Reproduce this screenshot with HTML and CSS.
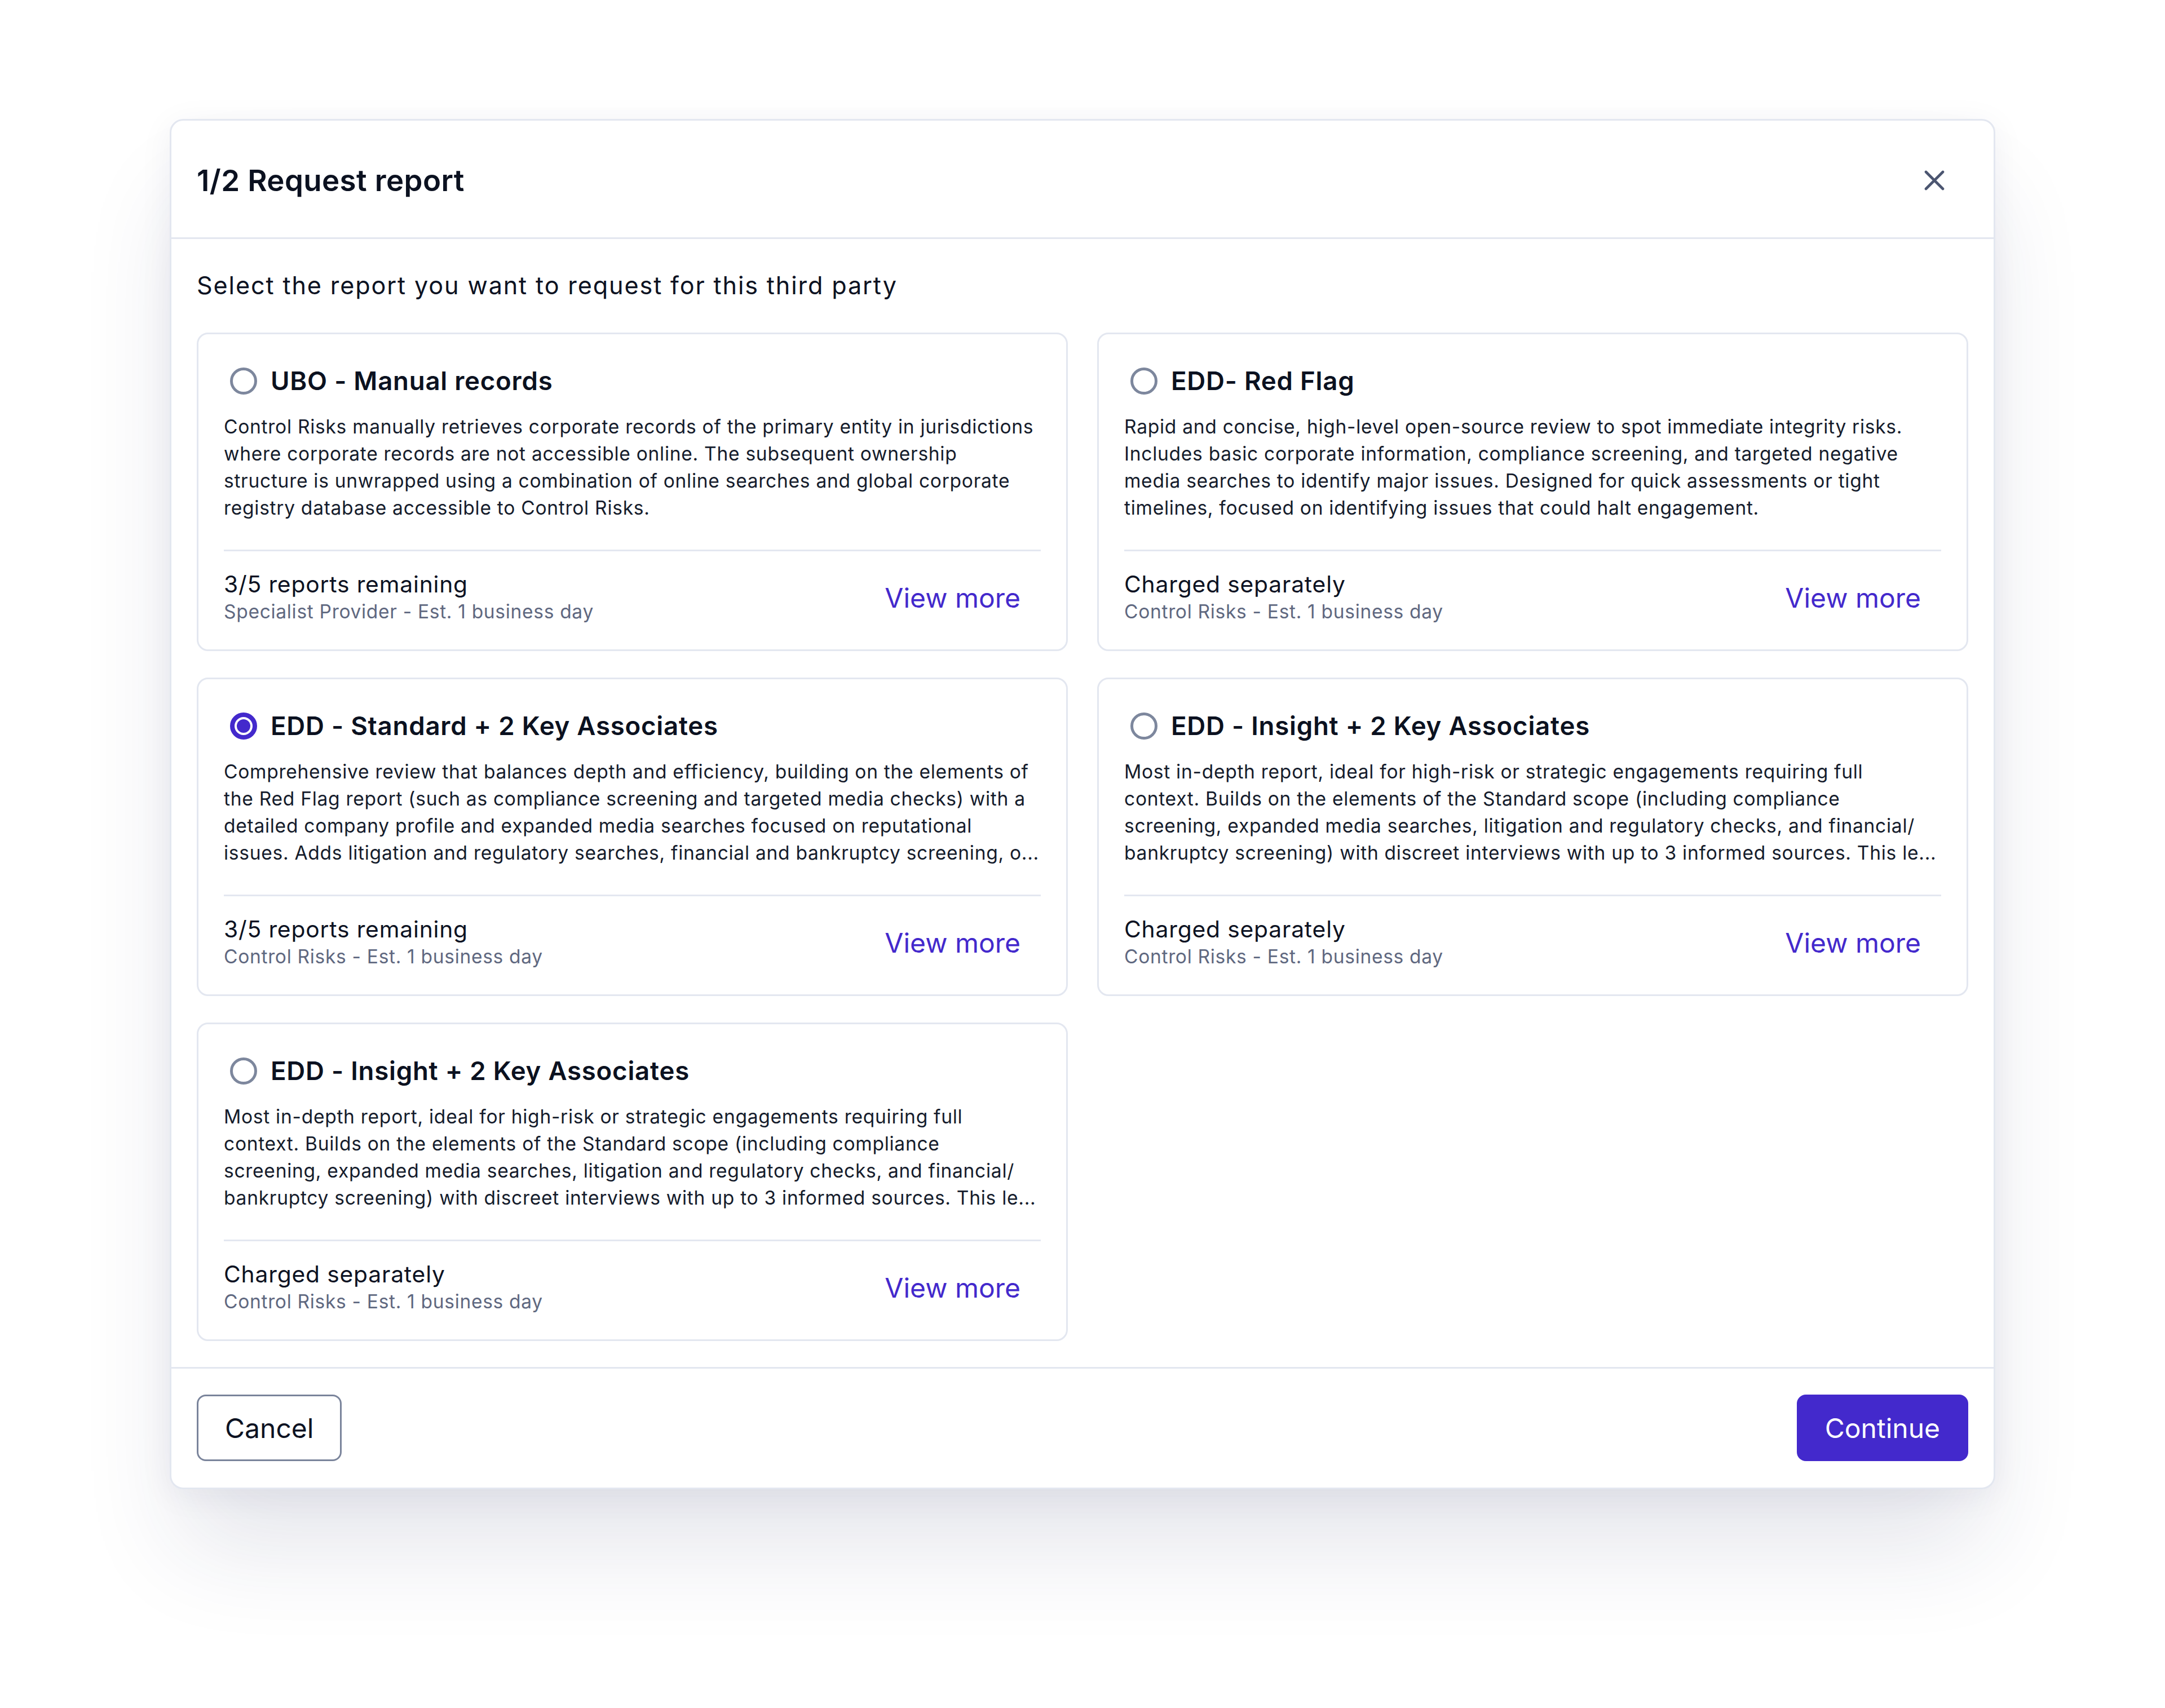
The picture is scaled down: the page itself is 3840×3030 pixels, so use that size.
FILE: index.html
```html
<!DOCTYPE html>
<html lang="en">
<head>
    <meta charset="UTF-8">
    <meta name="viewport" content="width=device-width, initial-scale=1.0">
    <title>Request report</title>
    <link rel="stylesheet" href="styles.css">
</head>
<body>
    <div class="modal">
        <div class="modal-header">
            <h2>1/2 Request report</h2>
            <button class="close" aria-label="Close">
                <svg width="36" height="36" viewBox="0 0 36 36">
                    <path d="M3 3L33 33M33 3L3 33" stroke="#4B5570" stroke-width="4.6" stroke-linecap="round" fill="none"/>
                </svg>
            </button>
        </div>

        <div class="modal-body">
            <p class="intro">Select the report you want to request for this third party</p>

            <div class="report-grid">
                <div class="report">
                    <div class="report-title"><span class="radio"></span>UBO - Manual records</div>
                    <p class="report-desc">Control Risks manually retrieves corporate records of the primary entity in jurisdictions where corporate records are not accessible online. The subsequent ownership structure is unwrapped using a combination of online searches and global corporate registry database accessible to Control Risks.</p>
                    <div class="report-foot">
                        <div>
                            <div class="remaining">3/5 reports remaining</div>
                            <div class="provider">Specialist Provider - Est. 1 business day</div>
                        </div>
                        <a class="view-more" href="#">View more</a>
                    </div>
                </div>

                <div class="report">
                    <div class="report-title"><span class="radio"></span>EDD- Red Flag</div>
                    <p class="report-desc">Rapid and concise, high-level open-source review to spot immediate integrity risks. Includes basic corporate information, compliance screening, and targeted negative media searches to identify major issues. Designed for quick assessments or tight timelines, focused on identifying issues that could halt engagement.</p>
                    <div class="report-foot">
                        <div>
                            <div class="remaining">Charged separately</div>
                            <div class="provider">Control Risks - Est. 1 business day</div>
                        </div>
                        <a class="view-more" href="#">View more</a>
                    </div>
                </div>

                <div class="report">
                    <div class="report-title"><span class="radio checked"></span>EDD - Standard + 2 Key Associates</div>
                    <p class="report-desc">Comprehensive review that balances depth and efficiency, building on the elements of the Red Flag report (such as compliance screening and targeted media checks) with a detailed company profile and expanded media searches focused on reputational issues. Adds litigation and regulatory searches, financial and bankruptcy screening, o...</p>
                    <div class="report-foot">
                        <div>
                            <div class="remaining">3/5 reports remaining</div>
                            <div class="provider">Control Risks - Est. 1 business day</div>
                        </div>
                        <a class="view-more" href="#">View more</a>
                    </div>
                </div>

                <div class="report">
                    <div class="report-title"><span class="radio"></span>EDD - Insight + 2 Key Associates</div>
                    <p class="report-desc">Most in-depth report, ideal for high-risk or strategic engagements requiring full context. Builds on the elements of the Standard scope (including compliance screening, expanded media searches, litigation and regulatory checks, and financial/ bankruptcy screening) with discreet interviews with up to 3 informed sources. This le...</p>
                    <div class="report-foot">
                        <div>
                            <div class="remaining">Charged separately</div>
                            <div class="provider">Control Risks - Est. 1 business day</div>
                        </div>
                        <a class="view-more" href="#">View more</a>
                    </div>
                </div>

                <div class="report">
                    <div class="report-title"><span class="radio"></span>EDD - Insight + 2 Key Associates</div>
                    <p class="report-desc">Most in-depth report, ideal for high-risk or strategic engagements requiring full context. Builds on the elements of the Standard scope (including compliance screening, expanded media searches, litigation and regulatory checks, and financial/ bankruptcy screening) with discreet interviews with up to 3 informed sources. This le...</p>
                    <div class="report-foot">
                        <div>
                            <div class="remaining">Charged separately</div>
                            <div class="provider">Control Risks - Est. 1 business day</div>
                        </div>
                        <a class="view-more" href="#">View more</a>
                    </div>
                </div>
            </div>
        </div>

        <div class="modal-footer">
            <button class="btn btn-outline">Cancel</button>
            <button class="btn btn-primary">Continue</button>
        </div>
    </div>
</body>
</html>
```

FILE: styles.css
```css
body {
    font-family: Inter, "Noto Sans", sans-serif;
    background-color: #ffffff;
    color: #0c1222;
    margin: 0;
    padding: 211px 0 393px;
}
.modal {
    width: 3238px;
    margin: 0 auto;
    box-sizing: border-box;
    background: white;
    border: 3px solid #e3e7f0;
    border-radius: 24px;
    box-shadow: 0 120px 180px -20px rgba(30, 40, 90, 0.12), 0 10px 60px rgba(30, 40, 90, 0.06);
}
.modal-header {
    display: flex;
    justify-content: space-between;
    align-items: center;
    height: 210px;
    box-sizing: border-box;
    padding: 4px 48px 0 45px;
    border-bottom: 3px solid #e3e7f0;
}
.modal-header h2 {
    margin: 0;
    font-size: 52.8px;
    font-weight: 600;
    line-height: 72px;
    letter-spacing: 0.4px;
    color: #0b1120;
}
.close {
    width: 58px;
    height: 58px;
    margin-right: 28px;
    padding: 0;
    border: none;
    background: none;
    display: flex;
    align-items: center;
    justify-content: center;
    cursor: pointer;
}
.modal-body {
    padding: 50px 45px 46px;
}
.intro {
    margin: 0 0 52px;
    font-size: 43.2px;
    line-height: 64px;
    letter-spacing: 1.85px;
    color: #0c1222;
}
.report-grid {
    display: grid;
    grid-template-columns: 1fr 1fr;
    column-gap: 52px;
    row-gap: 47px;
}
.report {
    border: 3px solid #e3e7f0;
    border-radius: 20px;
    padding: 54px 45px 43px;
}
.report-title {
    display: flex;
    align-items: center;
    font-size: 45.6px;
    font-weight: 600;
    line-height: 58px;
    letter-spacing: 0.75px;
    color: #0b1120;
}
.radio {
    width: 48px;
    height: 48px;
    box-sizing: border-box;
    border: 5.5px solid #7d879d;
    border-radius: 50%;
    margin: 0 24px 0 11px;
    flex-shrink: 0;
}
.radio.checked {
    border: 8px solid #4329cc;
    padding: 4px;
    background: #4329cc content-box;
}
.report-desc {
    margin: 28px 0 0;
    font-size: 33.6px;
    line-height: 48px;
    letter-spacing: 0.7px;
    color: #151c2c;
    display: -webkit-box;
    -webkit-line-clamp: 4;
    -webkit-box-orient: vertical;
    overflow: hidden;
    height: 192px;
}
.report-foot {
    display: flex;
    justify-content: space-between;
    align-items: center;
    margin-top: 50px;
    padding-top: 33px;
    border-top: 3px solid #e3e7f0;
}
.remaining {
    font-size: 40.8px;
    line-height: 50px;
    letter-spacing: 0.8px;
    color: #0c1222;
}
.provider {
    font-size: 33.6px;
    line-height: 48px;
    letter-spacing: 0.66px;
    color: #5f6880;
}
.view-more {
    padding: 0 36px;
    font-size: 48px;
    color: #4329cc;
    text-decoration: none;
}
.modal-footer {
    display: flex;
    justify-content: space-between;
    padding: 46px 45px 47px;
    border-top: 3px solid #e3e7f0;
}
.btn {
    height: 118px;
    padding: 0 47px;
    border-radius: 16px;
    font-family: Inter, "Noto Sans", sans-serif;
    font-size: 48px;
    cursor: pointer;
}
.btn-outline {
    background: white;
    color: #0c1222;
    border: 3px solid #7a849b;
}
.btn-primary {
    background: #4329cc;
    color: white;
    border: 3px solid #4329cc;
}
```
